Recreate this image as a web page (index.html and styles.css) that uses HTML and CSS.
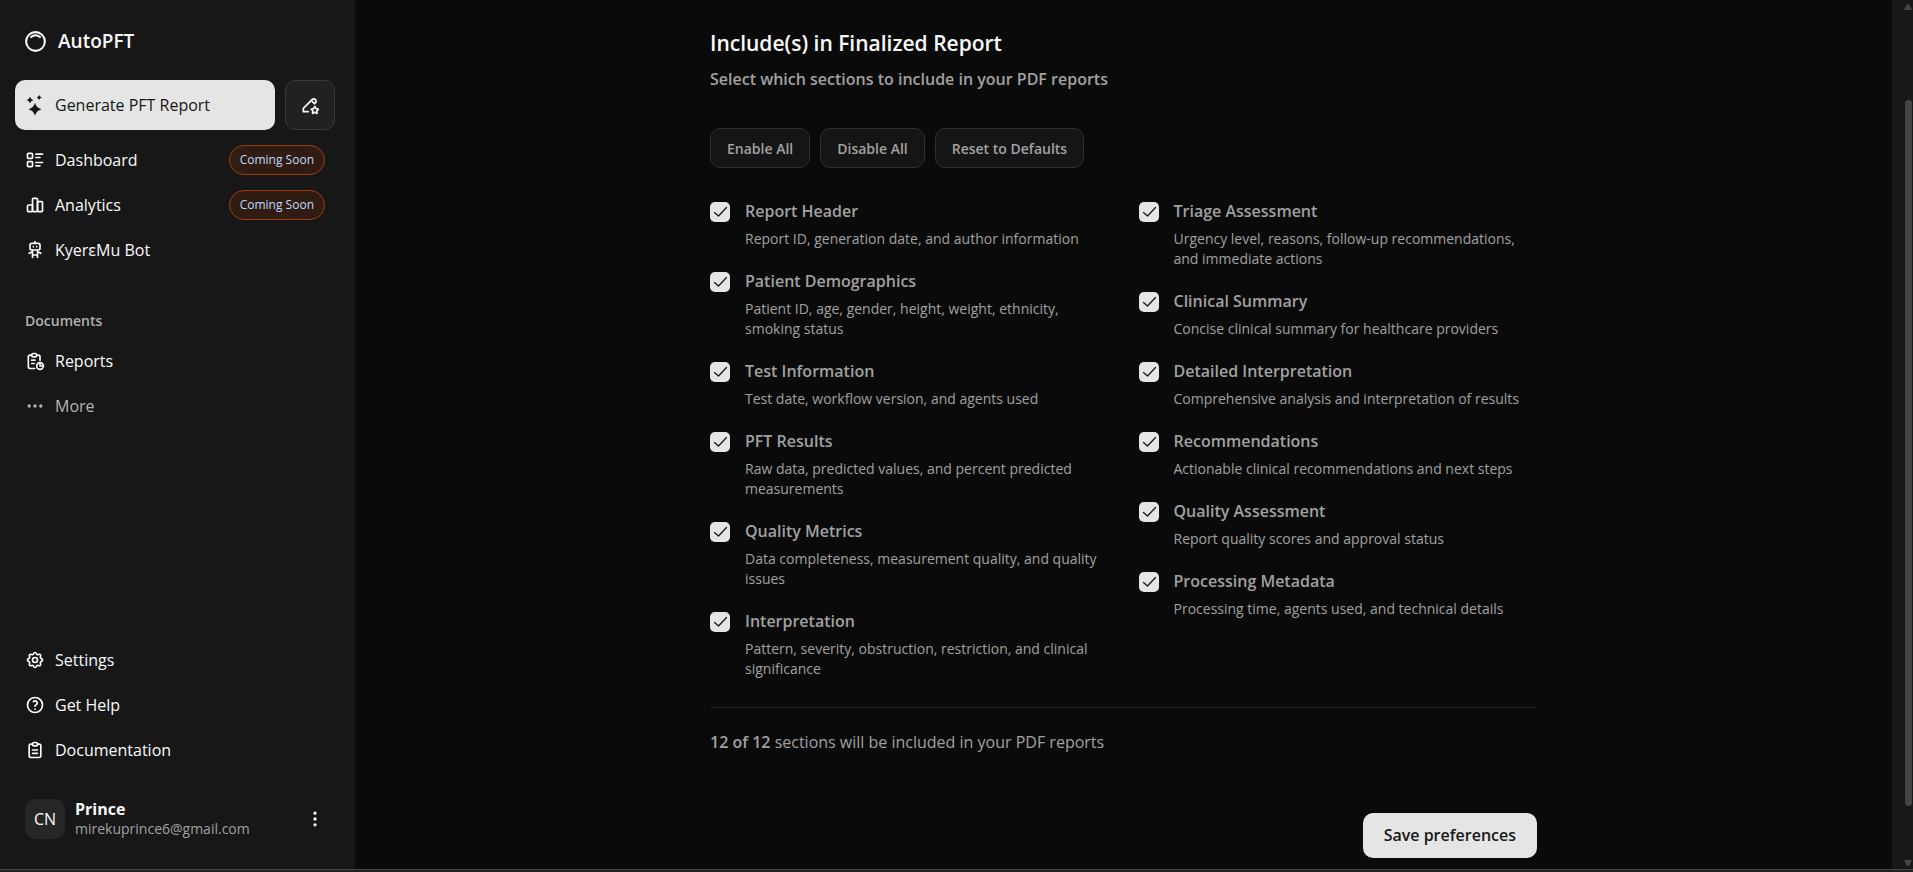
FILE: index.html
```html
<!DOCTYPE html>
<html lang="en">
<head>
<meta charset="utf-8">
<meta name="viewport" content="width=device-width, initial-scale=1">
<title>AutoPFT</title>
<link rel="stylesheet" href="styles.css">
</head>
<body>
<div class="app">
  <aside class="sidebar">
    <a class="brand" href="#">
      <svg class="brand-icon" viewBox="0 0 24 24"><circle cx="12" cy="12" r="9"/><path d="M16.243 7.757a6 6 0 0 0 -8.486 0"/></svg>
      <span>AutoPFT</span>
    </a>
    <div class="actions">
      <button class="generate" type="button">
        <svg class="icon solid" viewBox="0 0 24 24"><path d="M12 9.200q1.600 6.200 7.800 7.800q-6.200 1.600 -7.800 7.800q-1.600 -6.200 -7.800 -7.800q6.200 -1.600 7.800 -7.800z"/><path d="M6 2q1 3 4 4q-3 1 -4 4q-1 -3 -4 -4q3 -1 4 -4z"/><path d="M17 0q.7 2.300 3 3q-2.300 .7 -3 3q-.7 -2.300 -3 -3q2.300 -.7 3 -3z"/></svg>
        <span>Generate PFT Report</span>
      </button>
      <button class="compose" type="button" aria-label="Customize report">
        <svg class="icon" viewBox="0 0 24 24"><path d="M10 20h-6v-4l10.500 -10.500a2.828 2.828 0 1 1 4 4l-1 1"/><path d="M13.500 6.500l3.500 3.500"/><path d="M17.800 20.817l-2.172 1.138a.392 .392 0 0 1 -.568 -.41l.415 -2.411l-1.757 -1.707a.389 .389 0 0 1 .217 -.665l2.428 -.352l1.086 -2.193a.392 .392 0 0 1 .702 0l1.086 2.193l2.428 .352a.39 .39 0 0 1 .217 .665l-1.757 1.707l.414 2.41a.39 .39 0 0 1 -.567 .411l-2.172 -1.138z"/></svg>
      </button>
    </div>
    <nav class="nav" aria-label="Main">
      <a class="nav-item" href="#">
        <svg class="icon" viewBox="0 0 24 24"><path d="M13 5h8M13 9h5M13 15h8M13 19h5"/><rect x="3" y="4" width="6" height="6" rx="1"/><rect x="3" y="14" width="6" height="6" rx="1"/></svg>
        <span>Dashboard</span><span class="badge">Coming Soon</span>
      </a>
      <a class="nav-item" href="#">
        <svg class="icon" viewBox="0 0 24 24"><rect x="3" y="12" width="6" height="8" rx="1"/><rect x="9" y="4" width="6" height="16" rx="1"/><rect x="15" y="8" width="6" height="12" rx="1"/></svg>
        <span>Analytics</span><span class="badge">Coming Soon</span>
      </a>
      <a class="nav-item" href="#">
        <svg class="icon" viewBox="0 0 24 24"><rect x="6" y="4" width="12" height="8" rx="2"/><path d="M12 2v2M9 12v9M15 12v9M5 16l4 -2M15 14l4 2M9 18h6M10 8v.01M14 8v.01"/></svg>
        <span>KyerɛMu Bot</span>
      </a>
    </nav>
    <h2 class="group-title">Documents</h2>
    <nav class="nav" aria-label="Documents">
      <a class="nav-item" href="#">
        <svg class="icon" viewBox="0 0 24 24"><path d="M8 5h-2a2 2 0 0 0 -2 2v12a2 2 0 0 0 2 2h5.697M18 14v4h4M18 11v-4a2 2 0 0 0 -2 -2h-2M8 11h4M8 15h3"/><rect x="8" y="3" width="6" height="4" rx="2"/><circle cx="18" cy="18" r="4"/></svg>
        <span>Reports</span>
      </a>
      <a class="nav-item muted" href="#">
        <svg class="icon" viewBox="0 0 24 24"><circle cx="5" cy="12" r="1"/><circle cx="12" cy="12" r="1"/><circle cx="19" cy="12" r="1"/></svg>
        <span>More</span>
      </a>
    </nav>
    <nav class="nav nav-bottom" aria-label="Support">
      <a class="nav-item" href="#">
        <svg class="icon" viewBox="0 0 24 24"><path d="M10.325 4.317c.426 -1.756 2.924 -1.756 3.350 0a1.724 1.724 0 0 0 2.573 1.066c1.543 -.94 3.310 .826 2.370 2.370a1.724 1.724 0 0 0 1.065 2.572c1.756 .426 1.756 2.924 0 3.350a1.724 1.724 0 0 0 -1.066 2.573c.94 1.543 -.826 3.310 -2.370 2.370a1.724 1.724 0 0 0 -2.572 1.065c-.426 1.756 -2.924 1.756 -3.350 0a1.724 1.724 0 0 0 -2.573 -1.066c-1.543 .94 -3.310 -.826 -2.370 -2.370a1.724 1.724 0 0 0 -1.065 -2.572c-1.756 -.426 -1.756 -2.924 0 -3.350a1.724 1.724 0 0 0 1.066 -2.573c-.94 -1.543 .826 -3.310 2.370 -2.370c1 .608 2.296 .07 2.572 -1.065z"/><circle cx="12" cy="12" r="3"/></svg>
        <span>Settings</span>
      </a>
      <a class="nav-item" href="#">
        <svg class="icon" viewBox="0 0 24 24"><circle cx="12" cy="12" r="9"/><path d="M12 17v.01M12 13.500a1.500 1.500 0 0 1 1 -1.500a2.600 2.600 0 1 0 -3 -4"/></svg>
        <span>Get Help</span>
      </a>
      <a class="nav-item" href="#">
        <svg class="icon" viewBox="0 0 24 24"><path d="M9 5h-2a2 2 0 0 0 -2 2v12a2 2 0 0 0 2 2h10a2 2 0 0 0 2 -2v-12a2 2 0 0 0 -2 -2h-2M9 12h6M9 16h6"/><rect x="9" y="3" width="6" height="4" rx="2"/></svg>
        <span>Documentation</span>
      </a>
    </nav>
    <button class="user" type="button">
      <span class="avatar">CN</span>
      <span class="user-text"><span class="user-name">Prince</span><span class="user-mail">mirekuprince6@gmail.com</span></span>
      <svg class="icon" viewBox="0 0 24 24"><circle cx="12" cy="5" r="1"/><circle cx="12" cy="12" r="1"/><circle cx="12" cy="19" r="1"/></svg>
    </button>
  </aside>

  <main class="main">
    <form class="content">
      <h1 class="title">Include(s) in Finalized Report</h1>
      <p class="subtitle">Select which sections to include in your PDF reports</p>
      <div class="toolbar">
        <button class="tool" type="button">Enable All</button>
        <button class="tool" type="button">Disable All</button>
        <button class="tool" type="button">Reset to Defaults</button>
      </div>
      <div class="sections">
        <div class="column">
          <label class="option"><input class="check" type="checkbox" checked><span class="option-text"><span class="option-title">Report Header</span><span class="option-desc">Report ID, generation date, and author information</span></span></label>
          <label class="option"><input class="check" type="checkbox" checked><span class="option-text"><span class="option-title">Patient Demographics</span><span class="option-desc">Patient ID, age, gender, height, weight, ethnicity, smoking status</span></span></label>
          <label class="option"><input class="check" type="checkbox" checked><span class="option-text"><span class="option-title">Test Information</span><span class="option-desc">Test date, workflow version, and agents used</span></span></label>
          <label class="option"><input class="check" type="checkbox" checked><span class="option-text"><span class="option-title">PFT Results</span><span class="option-desc">Raw data, predicted values, and percent predicted measurements</span></span></label>
          <label class="option"><input class="check" type="checkbox" checked><span class="option-text"><span class="option-title">Quality Metrics</span><span class="option-desc">Data completeness, measurement quality, and quality issues</span></span></label>
          <label class="option"><input class="check" type="checkbox" checked><span class="option-text"><span class="option-title">Interpretation</span><span class="option-desc">Pattern, severity, obstruction, restriction, and clinical significance</span></span></label>
        </div>
        <div class="column">
          <label class="option"><input class="check" type="checkbox" checked><span class="option-text"><span class="option-title">Triage Assessment</span><span class="option-desc">Urgency level, reasons, follow-up recommendations, and immediate actions</span></span></label>
          <label class="option"><input class="check" type="checkbox" checked><span class="option-text"><span class="option-title">Clinical Summary</span><span class="option-desc">Concise clinical summary for healthcare providers</span></span></label>
          <label class="option"><input class="check" type="checkbox" checked><span class="option-text"><span class="option-title">Detailed Interpretation</span><span class="option-desc">Comprehensive analysis and interpretation of results</span></span></label>
          <label class="option"><input class="check" type="checkbox" checked><span class="option-text"><span class="option-title">Recommendations</span><span class="option-desc">Actionable clinical recommendations and next steps</span></span></label>
          <label class="option"><input class="check" type="checkbox" checked><span class="option-text"><span class="option-title">Quality Assessment</span><span class="option-desc">Report quality scores and approval status</span></span></label>
          <label class="option"><input class="check" type="checkbox" checked><span class="option-text"><span class="option-title">Processing Metadata</span><span class="option-desc">Processing time, agents used, and technical details</span></span></label>
        </div>
      </div>
      <p class="summary"><strong>12 of 12</strong> sections will be included in your PDF reports</p>
      <button class="save" type="button">Save preferences</button>
    </form>
  </main>

  <div class="gutter" aria-hidden="true">
    <div class="scrollbar">
      <svg class="arrow" viewBox="0 0 8 6"><path d="M3 0h2l3 6h-8z"/></svg>
      <div class="track"><div class="thumb"></div></div>
      <svg class="arrow" viewBox="0 0 8 6"><path d="M0 0h8l-3 6h-2z"/></svg>
    </div>
  </div>
  <div class="window-edge"></div>
</div>
</body>
</html>
```

FILE: styles.css
```css
* { box-sizing: border-box; }

body {
  margin: 0;
  background: #0a0a0a;
  color: #fafafa;
  font-family: "Open Sans", "Noto Sans", sans-serif;
  font-size: 16px;
  line-height: 25px;
}

h1, h2, p { margin: 0; }
a { color: inherit; text-decoration: none; }
button { font: inherit; color: inherit; border: 0; background: none; padding: 0; cursor: pointer; }

.app {
  display: grid;
  grid-template-columns: 355px 1fr 21px;
  grid-template-rows: 1fr 3px;
  height: 100vh;
}

.icon {
  width: 20px;
  height: 20px;
  flex: none;
  overflow: visible;
  fill: none;
  stroke: currentColor;
  stroke-width: 2;
  stroke-linecap: round;
  stroke-linejoin: round;
}
.icon.solid { fill: currentColor; stroke: none; }

/* Sidebar */
.sidebar {
  display: flex;
  flex-direction: column;
  padding: 20px 20px 20px 15px;
  background: #171717;
}
.brand {
  display: flex;
  align-items: center;
  gap: 10px;
  height: 42px;
  padding-left: 8px;
  font-size: 19px;
  font-weight: 600;
}
.brand-icon { width: 25px; height: 25px; fill: none; stroke: currentColor; stroke-width: 2; stroke-linecap: round; }
.actions { display: flex; gap: 10px; margin: 18px 0 10px; }
.generate {
  display: flex;
  flex: 1;
  align-items: center;
  gap: 10px;
  height: 50px;
  padding: 0 10px;
  border-radius: 10px;
  background: #e5e5e5;
  color: #171717;
}
.compose {
  display: grid;
  place-items: center;
  width: 50px;
  height: 50px;
  border: 1px solid #3a3a3a;
  border-radius: 10px;
  background: #212121;
}
.nav { display: flex; flex-direction: column; gap: 5px; }
.nav-item { display: flex; align-items: center; gap: 10px; height: 40px; padding: 0 10px; line-height: 26px; }
.nav-item.muted { color: #b5b5b5; }
.badge {
  margin-left: auto;
  padding: 0 10px;
  border: 1px solid #9a3f0c;
  border-radius: 15px;
  background: #301c12;
  color: #bedbff;
  font-size: 12px;
  line-height: 28px;
}
.group-title {
  margin: 31px 0 0;
  padding: 0 10px;
  color: #b0b0b0;
  font-size: 14px;
  font-weight: 600;
  line-height: 40px;
}
.nav-bottom { margin-top: auto; }
.user {
  display: flex;
  align-items: center;
  gap: 10px;
  height: 60px;
  margin-top: 19px;
  padding: 0 10px;
  text-align: left;
}
.avatar {
  display: grid;
  place-items: center;
  width: 40px;
  height: 40px;
  border-radius: 10px;
  background: #262626;
}
.user-text { display: grid; flex: 1; line-height: 20px; }
.user-name { font-weight: 700; }
.user-mail { color: #a1a1a1; font-size: 14px; }

/* Preferences */
.main { overflow: hidden; padding: 27px 30px 0; }
.content { display: flex; flex-direction: column; max-width: 827px; margin: 0 auto; }
.title { font-size: 21px; font-weight: 600; line-height: 32px; }
.subtitle { margin-top: 8px; color: #a1a1a1; font-weight: 600; }
.toolbar { display: flex; gap: 10px; margin-top: 36px; }
.tool {
  height: 40px;
  padding: 0 16px;
  border: 1px solid #303030;
  border-radius: 10px;
  background: #151515;
  color: #a1a1a1;
  font-size: 14px;
  font-weight: 600;
}
.sections {
  display: grid;
  grid-template-columns: 1fr 1fr;
  gap: 30px;
  margin-top: 31px;
  padding-bottom: 28px;
  border-bottom: 1px solid #1c1c1c;
}
.column { display: flex; flex-direction: column; gap: 20px; }
.option { display: flex; gap: 15px; color: #a1a1a1; }
.option-text { display: grid; gap: 5px; }
.option-title { font-weight: 600; }
.option-desc { font-size: 14px; line-height: 20px; }
.check {
  appearance: none;
  flex: none;
  width: 20px;
  height: 20px;
  margin: 3px 0 0;
  border-radius: 5px;
  background: #e5e5e5;
}
.check:checked {
  background: #e5e5e5 url("data:image/svg+xml,%3Csvg xmlns='http://www.w3.org/2000/svg' viewBox='0 0 20 20'%3E%3Cpath d='M4.500 10.500l4 3.500l8-8.500' fill='none' stroke='%23171717' stroke-width='1.300' stroke-linecap='round' stroke-linejoin='round'/%3E%3C/svg%3E") center / 20px 20px;
}
.summary { margin-top: 22px; color: #a1a1a1; }
.summary strong { font-weight: 600; }
.save {
  align-self: flex-end;
  height: 45px;
  margin-top: 58px;
  padding: 0 21px;
  border-radius: 10px;
  background: #e5e5e5;
  color: #171717;
  font-weight: 600;
}

/* Window chrome */
.gutter { display: flex; justify-content: flex-end; background: #171717; }
.scrollbar {
  display: flex;
  flex-direction: column;
  align-items: center;
  width: 10px;
  padding: 4px 0 3px;
  background: #18181a;
}
.arrow { width: 8px; height: 6px; fill: #454545; }
.track { flex: 1; width: 7px; padding: 90px 0 54px; }
.thumb { height: 100%; border-radius: 4px; background: #454545; }
.window-edge { grid-column: 1 / -1; border-top: 1px solid #454545; background: #222; }
```
